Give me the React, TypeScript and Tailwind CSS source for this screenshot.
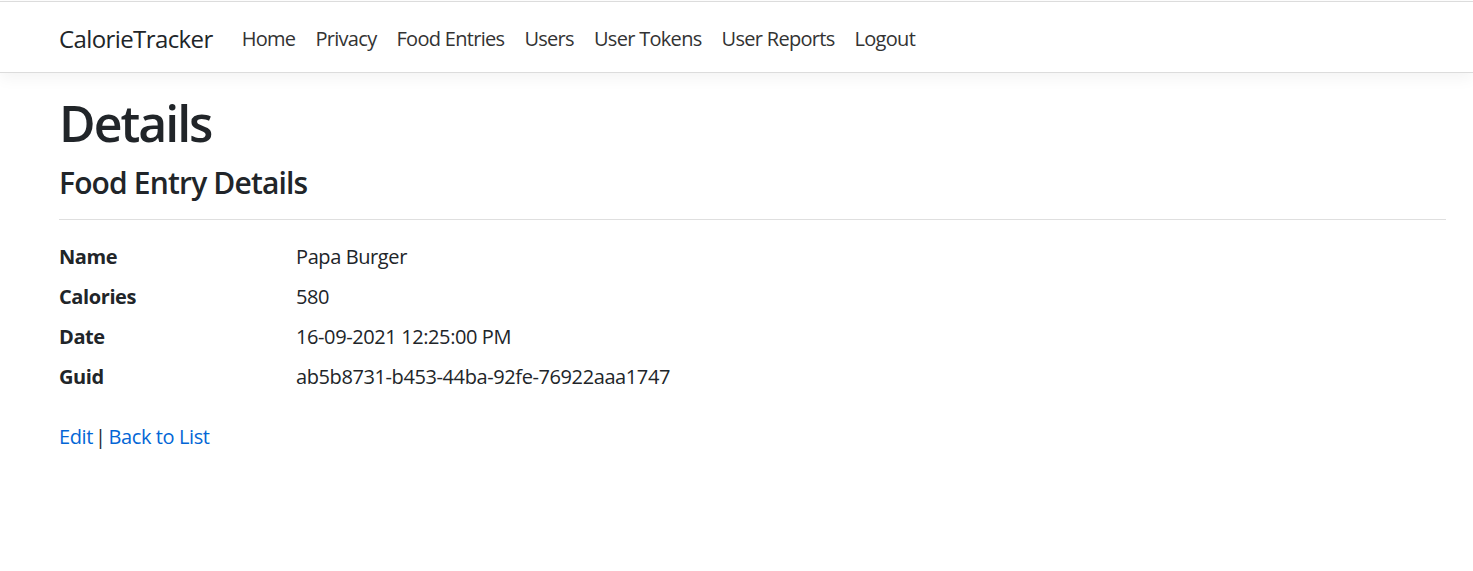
import React from 'react';

const navLinks = ['Home', 'Privacy', 'Food Entries', 'Users', 'User Tokens', 'User Reports', 'Logout'];

const details: [string, string][] = [
  ['Name', 'Papa Burger'],
  ['Calories', '580'],
  ['Date', '16-09-2021 12:25:00 PM'],
  ['Guid', 'ab5b8731-b453-44ba-92fe-76922aaa1747'],
];

const App: React.FC = () => {
  return (
    <div className="min-h-screen bg-white pt-px text-[#212529] font-['Open_Sans',sans-serif] tracking-[-0.025em]">
      {/* Navbar */}
      <header className="border-t border-b border-[#dcdcdc] bg-white shadow-[0_5px_15px_rgba(0,0,0,0.05)]">
        <nav className="flex h-[70px] items-center pt-[4px] pl-[59px] pr-[27px]">
          <a href="#" className="mr-[19px] text-[24px] tracking-[-0.025em] text-[#212529]">
            CalorieTracker
          </a>
          <ul className="flex items-center">
            {navLinks.map(link => (
              <li key={link}>
                <a href="#" className="px-[10px] text-[20px] tracking-[-0.035em] text-[#333]">
                  {link}
                </a>
              </li>
            ))}
          </ul>
        </nav>
      </header>

      {/* Content */}
      <main className="pl-[59px] pr-[27px]">
        <h1 className="mt-[20px] text-[50px] font-semibold leading-[60px] tracking-[-0.04em]">Details</h1>

        <div className="mt-[12px]">
          <h4 className="text-[30px] font-semibold leading-[36px] tracking-[-0.028em]">Food Entry Details</h4>
          <hr className="mt-[18px] mb-[22px] border-t border-[#dfdfdf]" />

          <dl className="grid grid-cols-[237px_1fr] text-[20px] leading-[30px]">
            {details.map(([label, value]) => (
              <React.Fragment key={label}>
                <dt className="mb-[10px] font-bold">{label}</dt>
                <dd className="mb-[10px]">{value}</dd>
              </React.Fragment>
            ))}
          </dl>
        </div>

        <div className="mt-[20px] text-[20px] leading-[30px]">
          <a href="#" className="text-[#0366d6]">Edit</a>
          <span className="pl-[2px] pr-[3px]">|</span>
          <a href="#" className="text-[#0366d6]">Back to List</a>
        </div>
      </main>
    </div>
  );
};

export default App;
